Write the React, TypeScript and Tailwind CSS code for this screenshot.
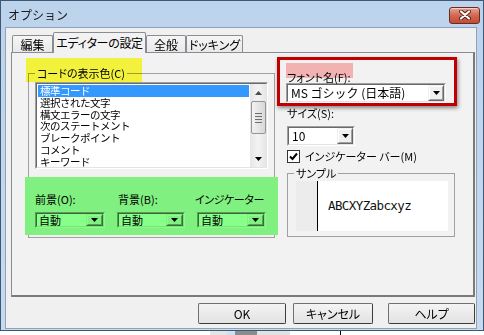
import React from "react";

const Tri = () => (
  <svg width="7" height="4" viewBox="0 0 7 4">
    <polygon points="0,0 7,0 3.5,4" fill="#000" />
  </svg>
);

const DropBtn = ({ size }: { size: string }) => (
  <div
    className={`${size} flex items-center justify-center bg-[#f0f0f0] border border-t-[#f0f0f0] border-l-[#f0f0f0] border-b-[#696969] border-r-[#696969]`}
  >
    <div className="flex flex-1 self-stretch items-center justify-center border border-t-white border-l-white border-b-[#a0a0a0] border-r-[#a0a0a0]">
      <Tri />
    </div>
  </div>
);

const Combo = ({
  box,
  text,
  btn,
  textCls,
}: {
  box: string;
  text: string;
  btn: string;
  textCls: string;
}) => (
  <div className={`${box} flex border border-t-[#a0a0a0] border-l-[#a0a0a0] border-b-white border-r-white`}>
    <div className="flex flex-1 items-center bg-white border border-t-[#696969] border-l-[#696969] border-b-[#e3e3e3] border-r-[#e3e3e3] overflow-hidden">
      <span className={`flex-1 pl-[2px] ${textCls} whitespace-nowrap`}>{text}</span>
      <DropBtn size={btn} />
    </div>
  </div>
);

const Tab = ({ label, w, sel }: { label: string; w: string; sel?: boolean }) =>
  sel ? (
    <div
      className={`${w} h-[21px] relative z-10 flex items-start justify-center pt-[3px] bg-[#f2f2f2] border border-b-0 border-[#898c95] rounded-t-[2px] text-[12px] leading-[14px] whitespace-nowrap tracking-[-0.3px] [font-feature-settings:'palt']`}
    >
      {label}
    </div>
  ) : (
    <div
      className={`${w} h-[17px] mb-[1px] flex items-start justify-center pt-[2px] bg-gradient-to-b from-[#f6f6f6] to-[#e8e8e8] border border-b-0 border-[#898c95] rounded-t-[2px] text-[12px] leading-[14px] whitespace-nowrap [font-feature-settings:'palt']`}
    >
      {label}
    </div>
  );

const Btn = ({ label, w }: { label: string; w: string }) => (
  <div
    className={`${w} h-[21px] flex items-center justify-center rounded-[2px] border border-[#707070] border-b-[#3c3c3c] border-r-[#3c3c3c] bg-gradient-to-b from-[#f4f4f4] to-[#e2e2e2] text-[12px] leading-[14px] [font-feature-settings:'palt']`}
  >
    {label}
  </div>
);

const items = [
  "標準コード",
  "選択された文字",
  "構文エラーの文字",
  "次のステートメント",
  "ブレークポイント",
  "コメント",
  "キーワード",
];

export default function App() {
  return (
    <div className="w-[484px] h-[335px] bg-white overflow-hidden font-['Noto_Sans_CJK_JP',sans-serif] text-black">
      {/* window */}
      <div className="h-[331px] flex flex-col border border-[#3d5775] bg-gradient-to-b from-[#bcd3ec] to-[#c7daee]">
        {/* title bar */}
        <div className="h-[26px] flex items-center justify-between pl-[7px] pr-[3px]">
          <span className="text-[12px] leading-[14px] pt-[2px] text-[#1a1a1a]">オプション</span>
          <div className="w-[31px] h-[17px] mt-[2px] rounded-[3px] border border-[#6b2a22] bg-gradient-to-b from-[#e8a293] via-[#d16852] to-[#c44a33] flex items-center justify-center shadow-[inset_0_1px_0_rgba(255,255,255,0.5)]">
            <svg width="12" height="10" viewBox="0 0 12 10">
              <path d="M2 1.5 L10 8.5 M10 1.5 L2 8.5" stroke="#5a1e15" strokeWidth="4" strokeLinecap="round" />
              <path d="M2 1.5 L10 8.5 M10 1.5 L2 8.5" stroke="#ffffff" strokeWidth="2.2" strokeLinecap="round" />
            </svg>
          </div>
        </div>
        {/* client */}
        <div className="flex-1 ml-[4px] mr-[6px] mb-[1px] bg-[#f0f0f0] border border-[#8da3bb] flex flex-col pl-[5px] pr-[1px] pt-[4px]">
          {/* tabs */}
          <div className="flex items-end h-[21px] pl-[1px]">
            <Tab label="編集" w="w-[41px]" />
            <Tab label="エディターの設定" w="w-[93px]" sel />
            <Tab label="全般" w="w-[40px]" />
            <Tab label="ドッキング" w="w-[57px]" />
          </div>
          {/* panel */}
          <div className="-mt-[1px] h-[245px] flex bg-[#f2f2f2] border border-t-[#898c95] border-l-[#898c95] border-r-2 border-b-2 border-r-[#7a7a7a] border-b-[#7a7a7a] pl-[13px]">
            {/* left column */}
            <div className="w-[252px] pt-[20px] shrink-0">
              <div className="relative w-[247px] h-[165px] ml-[3px] border border-[#a0a0a0] px-[6px] pt-[8px]">
                <span className="absolute -top-[8px] left-[6px] px-[2px] text-[11px] leading-[14px] whitespace-nowrap bg-[#f2f2f2] [font-feature-settings:'palt']">
                  コードの表示色(C)
                </span>
                <div className="absolute -left-[3px] -top-[16px] w-[116px] h-[24px] bg-[#ffff40] mix-blend-multiply" />
                {/* listbox */}
                <div className="h-[87px] flex border border-t-[#a0a0a0] border-l-[#a0a0a0] border-b-white border-r-white">
                  <div className="flex flex-1 bg-white border border-t-[#696969] border-l-[#696969] border-b-[#e3e3e3] border-r-[#e3e3e3] overflow-hidden">
                    <div className="flex-1 pt-[1px] pl-[1px] pr-[1px] overflow-hidden">
                      {items.map((t, i) => (
                        <div
                          key={t}
                          className={`h-[11.8px] pl-[2px] text-[10.5px] leading-[11.8px] tracking-[-0.5px] whitespace-nowrap ${
                            i === 0 ? "bg-[#3399ff] text-white" : ""
                          }`}
                        >
                          {t}
                        </div>
                      ))}
                    </div>
                    {/* scrollbar */}
                    <div className="w-[16px] flex flex-col items-center bg-gradient-to-r from-[#e6e6e6] via-[#f3f3f3] to-[#e6e6e6]">
                      <div className="h-[17px] flex items-center justify-center">
                        <svg width="7" height="4" viewBox="0 0 7 4">
                          <polygon points="0,4 7,4 3.5,0" fill="#4d4d4d" />
                        </svg>
                      </div>
                      <div className="w-[15px] h-[33px] rounded-[2px] border border-[#959595] bg-gradient-to-r from-[#f2f2f2] to-[#d8d8d8] flex flex-col items-center justify-center gap-[2px]">
                        <div className="w-[7px] h-[1px] bg-[#6e6e6e]" />
                        <div className="w-[7px] h-[1px] bg-[#6e6e6e]" />
                        <div className="w-[7px] h-[1px] bg-[#6e6e6e]" />
                        <div className="w-[7px] h-[1px] bg-[#6e6e6e]" />
                      </div>
                      <div className="flex-1" />
                      <div className="h-[17px] flex items-center justify-center">
                        <Tri />
                      </div>
                    </div>
                  </div>
                </div>
                {/* green block */}
                <div className="relative -mx-[10px] mt-[8px] h-[58px] bg-[#f0f0f0] flex pl-[10px]">
                  <div className="w-[70px] flex flex-col pt-[16px]">
                    <span className="h-[19px] text-[11px] leading-[13px] whitespace-nowrap [font-feature-settings:'palt']">前景(O):</span>
                    <Combo box="w-[70px] h-[16px]" text="自動" btn="w-[17px] h-[12px]" textCls="text-[11px] leading-[12px]" />
                  </div>
                  <div className="w-[68px] ml-[12px] flex flex-col pt-[16px]">
                    <span className="h-[19px] pl-[1px] text-[11px] leading-[13px] whitespace-nowrap [font-feature-settings:'palt']">背景(B):</span>
                    <Combo box="w-[68px] h-[16px]" text="自動" btn="w-[17px] h-[12px]" textCls="text-[11px] leading-[12px]" />
                  </div>
                  <div className="w-[71px] ml-[10px] flex flex-col pt-[16px]">
                    <span className="h-[19px] text-[11px] leading-[13px] whitespace-nowrap tracking-[-0.4px] [font-feature-settings:'palt']">インジケーター</span>
                    <div className="pl-[2px]">
                      <Combo box="w-[69px] h-[16px]" text="自動" btn="w-[17px] h-[12px]" textCls="text-[11px] leading-[12px]" />
                    </div>
                  </div>
                  <div className="absolute inset-0 bg-[#88ff88] mix-blend-multiply" />
                </div>
              </div>
            </div>
            {/* right column */}
            <div className="w-[180px] pt-[4px] flex flex-col">
              <div className="w-[180px] h-[49px] border-[3px] border-[#c00000] shadow-[1px_2px_4px_rgba(0,0,0,0.45)] pl-[6px] pt-[3px] flex flex-col items-start">
                <div className="relative h-[15px] pr-[2px]">
                  <span className="pl-[1px] text-[11px] leading-[15px] whitespace-nowrap [font-feature-settings:'palt']">フォント名(F):</span>
                  <div className="absolute inset-0 bg-[#ffbcbc] mix-blend-multiply" />
                </div>
                <div className="mt-[5px]">
                  <Combo box="w-[160px] h-[20px]" text="MS ゴシック (日本語)" btn="w-[16px] h-[16px]" textCls="text-[12px] leading-[14px] pl-[3px]" />
                </div>
              </div>
              <div className="pl-[10px] flex flex-col">
                <span className="mt-[1px] h-[14px] text-[11px] leading-[13px] whitespace-nowrap [font-feature-settings:'palt']">サイズ(S):</span>
                <div className="mt-[5px]">
                  <Combo box="w-[68px] h-[20px]" text="10" btn="w-[16px] h-[16px]" textCls="text-[12px] leading-[14px] pl-[3px]" />
                </div>
                <div className="mt-[4px] flex items-center h-[13px]">
                  <div className="w-[13px] h-[13px] bg-white border border-[#333] flex items-center justify-center">
                    <svg width="9" height="9" viewBox="0 0 9 9">
                      <path d="M1 4.5 L3.5 7 L8 1.5" stroke="#000" strokeWidth="2" fill="none" />
                    </svg>
                  </div>
                  <span className="ml-[5px] text-[11px] leading-[13px] whitespace-nowrap [font-feature-settings:'palt']">
                    インジケーター バー(M)
                  </span>
                </div>
                <div className="relative mt-[10px] w-[168px] h-[64px] border border-[#a0a0a0] pl-[8px] pt-[7px]">
                  <span className="absolute -top-[8px] left-[6px] px-[2px] bg-[#f2f2f2] text-[11px] leading-[14px] whitespace-nowrap [font-feature-settings:'palt']">
                    サンプル
                  </span>
                  <div className="w-[152px] h-[50px] bg-white flex">
                    <div className="w-[22px] bg-[#ececec] border-r border-black" />
                    <div className="flex items-center pl-[10px] font-['DejaVu_Sans_Mono',monospace] text-[12.5px] tracking-[-0.6px] text-[#111]">
                      ABCXYZabcxyz
                    </div>
                  </div>
                </div>
              </div>
            </div>
          </div>
          {/* buttons */}
          <div className="mt-[6px] flex justify-end">
            <Btn label="OK" w="w-[88px]" />
            <div className="w-[7px]" />
            <Btn label="キャンセル" w="w-[80px]" />
            <div className="w-[15px]" />
            <Btn label="ヘルプ" w="w-[87px]" />
          </div>
        </div>
      </div>
      {/* strip below window */}
      <div className="h-[4px] flex">
        <div className="w-[210px]" />
        <div className="w-[17px] bg-[#e4e4e4]" />
        <div className="w-[8px] bg-[#cfe0f0]" />
        <div className="w-[22px] bg-[#8c8c8c]" />
        <div className="w-[33px] bg-[#e2e2e2]" />
        <div className="w-[50px]" />
        <div className="w-[1px] bg-black" />
      </div>
    </div>
  );
}
